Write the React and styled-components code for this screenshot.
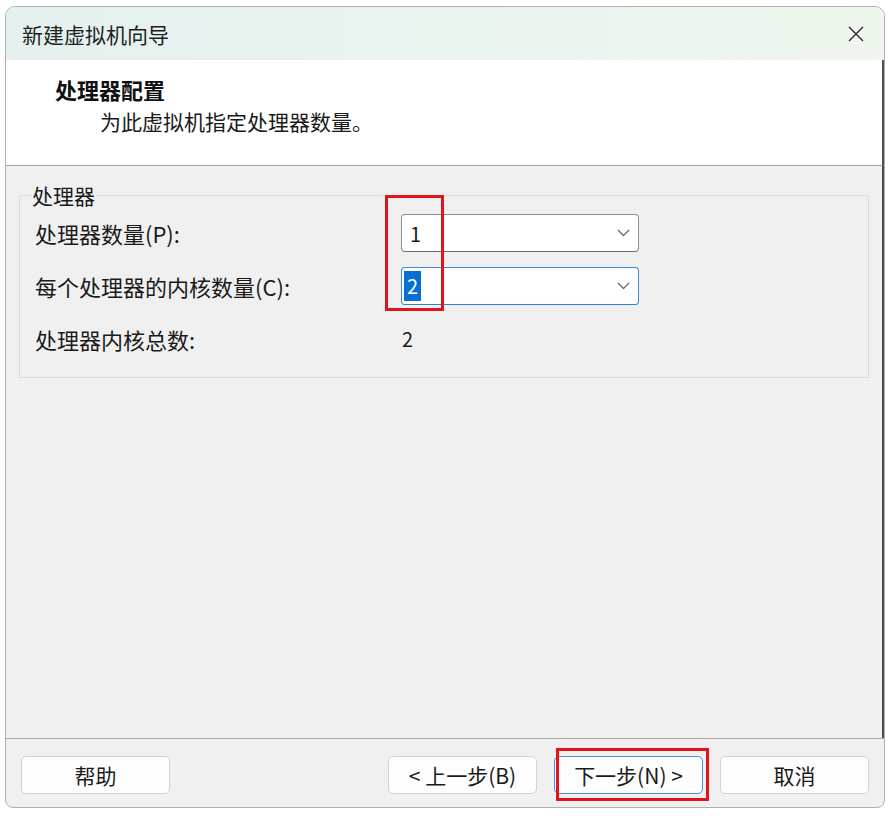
import styled, { createGlobalStyle } from 'styled-components';

const GlobalStyle = createGlobalStyle`
  html, body {
    margin: 0;
    background: #ffffff;
  }
  body {
    font-family: "Noto Sans CJK SC", "Noto Sans", sans-serif;
    color: #1a1a1a;
  }
`;

const Window = styled.div`
  margin: 6px 0 0 5px;
  width: 880px;
  height: 802px;
  box-sizing: border-box;
  border: 1px solid #b0b0b0;
  border-radius: 10px 10px 8px 8px;
  background: #f0f0f0;
  display: flex;
  flex-direction: column;
  overflow: hidden;
`;

const TitleBar = styled.div`
  height: 53px;
  flex-shrink: 0;
  display: flex;
  align-items: center;
  justify-content: space-between;
  padding: 0 20px 0 16px;
  background: linear-gradient(90deg, #e4f1f0 0%, #eaf4ef 50%, #eef6ed 100%);
`;

const TitleText = styled.div`
  font-size: 21px;
  line-height: 26px;
  color: #1f1f1f;
`;

const CloseIcon = styled.svg`
  width: 16px;
  height: 16px;
  display: block;
`;

const Header = styled.div`
  height: 106px;
  flex-shrink: 0;
  box-sizing: border-box;
  background: #ffffff;
  border-bottom: 1px solid #a3a3a3;
  border-right: 2px solid #4d4d4d;
  padding: 15px 0 0 49px;
`;

const PageTitle = styled.div`
  font-size: 22px;
  font-weight: 700;
  line-height: 28px;
  color: #111;
`;

const PageSubtitle = styled.div`
  margin: 4px 0 0 45px;
  font-size: 21px;
  line-height: 28px;
  color: #1a1a1a;
`;

const Body = styled.div`
  position: relative;
  flex: 1;
  border-right: 2px solid #4d4d4d;
  padding: 0 13px;
`;

const Group = styled.fieldset`
  margin: 18px 0 0;
  border: 1px solid #dadada;
  border-radius: 2px;
  padding: 8px 15px 19px;
`;

const Legend = styled.legend`
  margin-left: -4px;
  padding: 0 1px;
  font-size: 21px;
  line-height: 22px;
  color: #1a1a1a;
`;

const FieldGrid = styled.div`
  display: grid;
  grid-template-columns: 366px 238px;
  row-gap: 15px;
  align-items: center;
`;

const Label = styled.div`
  font-size: 22px;
  line-height: 38px;
  color: #1a1a1a;
`;

const Value = styled.div`
  font-size: 20px;
  line-height: 38px;
  padding-left: 1px;
`;

const Combo = styled.div`
  height: 38px;
  box-sizing: border-box;
  border: 1px solid ${p => (p.$focused ? '#3f8ad8' : '#8e8e8e')};
  border-bottom-color: ${p => (p.$focused ? '#2f7fd3' : '#6e6e6e')};
  border-radius: 4px;
  background: #ffffff;
  display: flex;
  align-items: center;
  justify-content: space-between;
  padding: 0 8px 0 ${p => (p.$focused ? '2px' : '8px')};
  font-size: 20px;
`;

const Selected = styled.span`
  display: inline-block;
  background: #0a6fd4;
  color: #ffffff;
  line-height: 30px;
  padding: 0 3px;
`;

const Chevron = styled.svg`
  width: 13px;
  height: 8px;
  display: block;
`;

const Mark = styled.div`
  position: absolute;
  box-sizing: border-box;
  border: 3px solid #e3131b;
  pointer-events: none;
`;

const ComboMark = styled(Mark)`
  left: 379px;
  top: 29px;
  width: 59px;
  height: 116px;
`;

const Footer = styled.div`
  height: 69px;
  flex-shrink: 0;
  box-sizing: border-box;
  border-top: 1px solid #a8a8a8;
  display: flex;
  align-items: flex-start;
  padding: 17px 15px 0;
  gap: 17px;
`;

const Spacer = styled.div`
  flex: 1;
`;

const Button = styled.button`
  width: 149px;
  height: 38px;
  box-sizing: border-box;
  background: #fdfdfd;
  border: 1px solid ${p => (p.$primary ? '#4a8fd6' : '#d2d2d2')};
  border-radius: 5px;
  font-family: inherit;
  font-size: 21px;
  color: #1a1a1a;
  padding: 0;
  cursor: pointer;
`;

const Marked = styled.div`
  position: relative;
`;

const ButtonMark = styled(Mark)`
  left: 2px;
  right: -6px;
  top: -8px;
  bottom: -7px;
`;

const ChevronDown = () => (
  <Chevron viewBox="0 0 13 8">
    <polyline points="1,1 6.5,6.5 12,1" fill="none" stroke="#6a6a6a" strokeWidth="1.3" />
  </Chevron>
);

const App = () => {
  return (
    <>
      <GlobalStyle />
      <Window>
        <TitleBar>
          <TitleText>新建虚拟机向导</TitleText>
          <CloseIcon viewBox="0 0 16 16">
            <path d="M1 1 L15 15 M15 1 L1 15" stroke="#2a2a2a" strokeWidth="1.4" fill="none" />
          </CloseIcon>
        </TitleBar>
        <Header>
          <PageTitle>处理器配置</PageTitle>
          <PageSubtitle>为此虚拟机指定处理器数量。</PageSubtitle>
        </Header>
        <Body>
          <Group>
            <Legend>处理器</Legend>
            <FieldGrid>
              <Label>处理器数量(P):</Label>
              <Combo>
                <span>1</span>
                <ChevronDown />
              </Combo>
              <Label>每个处理器的内核数量(C):</Label>
              <Combo $focused>
                <Selected>2</Selected>
                <ChevronDown />
              </Combo>
              <Label>处理器内核总数:</Label>
              <Value>2</Value>
            </FieldGrid>
          </Group>
          <ComboMark />
        </Body>
        <Footer>
          <Button>帮助</Button>
          <Spacer />
          <Button>&lt; 上一步(B)</Button>
          <Marked>
            <Button $primary>下一步(N) &gt;</Button>
            <ButtonMark />
          </Marked>
          <Button>取消</Button>
        </Footer>
      </Window>
    </>
  );
};

export default App;
